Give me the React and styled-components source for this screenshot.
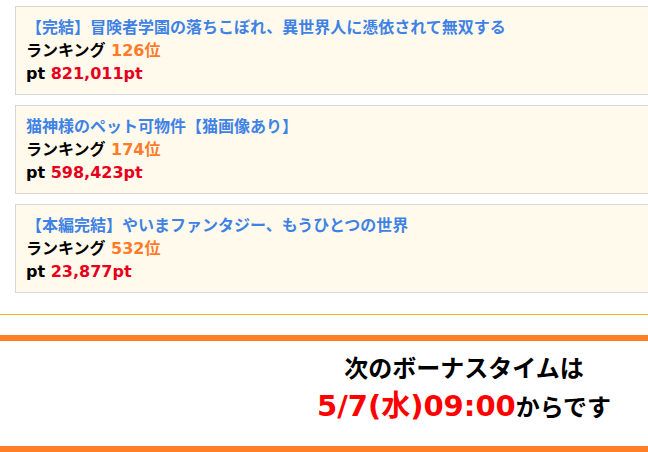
import React from "react"
import styled, { createGlobalStyle } from "styled-components"

const GlobalStyle = createGlobalStyle`
  body {
    margin: 0;
    overflow: hidden;
    background: #fff;
    font-family: "DejaVu Sans", "Noto Sans CJK JP", sans-serif;
  }
`

const Page = styled.div`
  width: 928px;
`

const RankingList = styled.ul`
  list-style: none;
  margin: 0;
  padding: 6px 0 21px 15px;
  display: flex;
  flex-direction: column;
  gap: 10px;
  border-bottom: 1px solid #f0b617;
`

const Card = styled.li`
  width: 880px;
  padding: 9px 10px;
  background: #fffaeb;
  border: 1px solid #d6d6d6;
  font-size: 16px;
  line-height: 23px;
  font-weight: bold;
  color: #000;
`

const Title = styled.a`
  display: block;
  color: #3f82e6;
  text-decoration: none;
`

const Line = styled.div``

const Value = styled.span`
  color: ${(p) => p.$color};
`

const BonusBox = styled.section`
  margin-top: 20px;
  border-top: 6px solid #ff7f27;
  border-bottom: 6px solid #ff7f27;
  padding: 13px 0 16px;
  text-align: center;
  font-weight: bold;
  color: #000;
`

const BonusLead = styled.div`
  font-size: 24px;
  line-height: 30px;
`

const BonusTime = styled.div`
  font-size: 24px;
  line-height: 44px;
`

const BonusDate = styled.span`
  color: #ff0000;
  font-size: 29px;
`

const novels = [
  { title: "【完結】冒険者学園の落ちこぼれ、異世界人に憑依されて無双する", rank: 126, pt: "821,011" },
  { title: "猫神様のペット可物件【猫画像あり】", rank: 174, pt: "598,423" },
  { title: "【本編完結】やいまファンタジー、もうひとつの世界", rank: 532, pt: "23,877" },
]

const App = () => {
  return (
    <Page>
      <GlobalStyle />
      <RankingList>
        {novels.map((n) => (
          <Card key={n.title}>
            <Title href="#">{n.title}</Title>
            <Line>
              ランキング <Value $color="#ff7b2a">{n.rank}位</Value>
            </Line>
            <Line>
              pt <Value $color="#e6001e">{n.pt}pt</Value>
            </Line>
          </Card>
        ))}
      </RankingList>

      <BonusBox>
        <BonusLead>次のボーナスタイムは</BonusLead>
        <BonusTime>
          <BonusDate>5/7(水)09:00</BonusDate>からです
        </BonusTime>
      </BonusBox>
    </Page>
  )
}

export default App
